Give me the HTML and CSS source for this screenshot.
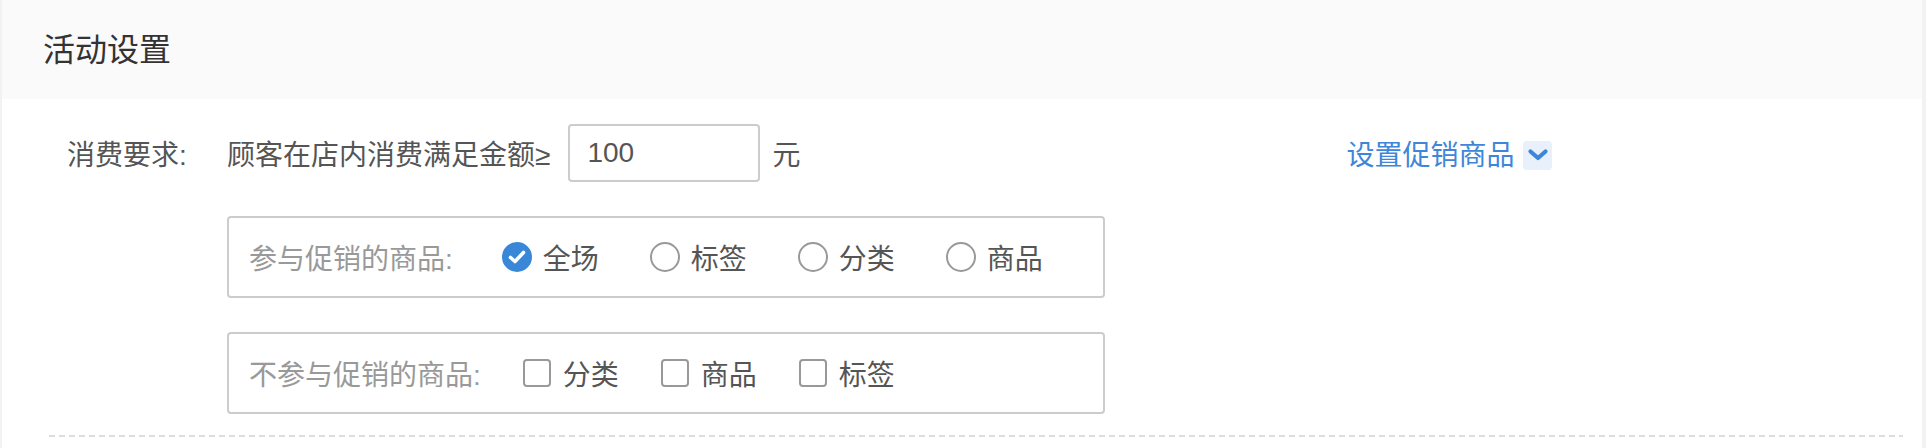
FILE: index.html
```html
<!DOCTYPE html>
<html lang="zh-CN">
<head>
<meta charset="utf-8">
<title>活动设置</title>
<link rel="stylesheet" href="styles.css">
</head>
<body>
<div class="panel">
  <div class="panel-head"><span class="title">活动设置</span></div>
  <div class="panel-body">
    <div class="row row-req">
      <span class="row-label">消费要求:</span>
      <span class="text">顾客在店内消费满足金额≥</span>
      <input class="amount" type="text" value="100">
      <span class="text unit">元</span>
      <a class="link">设置促销商品</a>
      <span class="drop">
        <svg width="22" height="14" viewBox="0 0 22 14"><path d="M3.5 3.5 L11 10 L18.5 3.5" fill="none" stroke="#3f86d8" stroke-width="4.2" stroke-linecap="round" stroke-linejoin="round"/></svg>
      </span>
    </div>
    <div class="group group-1">
      <span class="group-label">参与促销的商品:</span>
      <span class="opt radio-opt"><span class="radio checked"><svg width="20" height="16" viewBox="0 0 20 16"><path d="M3.5 8.5 L8 12.5 L16.5 3.5" fill="none" stroke="#fff" stroke-width="3.6" stroke-linecap="round" stroke-linejoin="round"/></svg></span><span class="opt-text">全场</span></span>
      <span class="opt radio-opt"><span class="radio"></span><span class="opt-text">标签</span></span>
      <span class="opt radio-opt"><span class="radio"></span><span class="opt-text">分类</span></span>
      <span class="opt radio-opt"><span class="radio"></span><span class="opt-text">商品</span></span>
    </div>
    <div class="group group-2">
      <span class="group-label">不参与促销的商品:</span>
      <span class="opt check-opt"><span class="check"></span><span class="opt-text">分类</span></span>
      <span class="opt check-opt"><span class="check"></span><span class="opt-text">商品</span></span>
      <span class="opt check-opt"><span class="check"></span><span class="opt-text">标签</span></span>
    </div>
    <div class="dash"></div>
  </div>
</div>
</body>
</html>
```
FILE: styles.css
```css
html, body {
  margin: 0;
  padding: 0;
  background: #fff;
}
body {
  font-family: "Liberation Sans", "Noto Sans CJK SC", sans-serif;
  color: #555;
  font-size: 28px;
}
.panel {
  height: 448px;
  border-left: 2px solid #f2f2f2;
  border-right: 4px solid #f2f2f2;
  box-sizing: border-box;
}
.panel-head {
  height: 99px;
  background: #fafafa;
  display: flex;
  align-items: center;
  padding-left: 41px;
}
.title {
  font-size: 32px;
  color: #333;
  line-height: 1;
}
.panel-body {
  padding-top: 25px;
}
.row {
  display: flex;
  align-items: center;
  height: 58px;
  padding-left: 65px;
}
.row-label {
  width: 160px;
  color: #555;
}
.text {
  color: #555;
}
.amount {
  box-sizing: border-box;
  width: 192px;
  height: 58px;
  margin-left: 18px;
  border: 2px solid #ccc;
  border-radius: 4px;
  padding: 0 0 0 17px;
  font-family: "Liberation Sans", "Noto Sans CJK SC", sans-serif;
  font-size: 28px;
  color: #555;
  outline: none;
}
.unit {
  margin-left: 12px;
}
.link {
  margin-left: 546px;
  color: #3f86d8;
  cursor: pointer;
}
.drop {
  width: 29px;
  height: 29px;
  margin-left: 9px;
  margin-top: 4px;
  border-radius: 4px;
  background: #e7f0fb;
  display: flex;
  align-items: center;
  justify-content: center;
}
.group {
  box-sizing: border-box;
  width: 878px;
  height: 82px;
  margin-left: 225px;
  margin-top: 34px;
  border: 2px solid #ccc;
  border-radius: 4px;
  display: flex;
  align-items: center;
  padding-left: 20px;
}
.group-label {
  color: #999;
}
.group-1 .group-label {
  margin-right: 49px;
}
.group-2 .group-label {
  margin-right: 42px;
}
.opt {
  display: flex;
  align-items: center;
}
.radio-opt {
  margin-right: 51px;
}
.check-opt {
  margin-right: 42px;
}
.radio {
  box-sizing: border-box;
  width: 30px;
  height: 30px;
  border-radius: 50%;
  border: 2px solid #999;
  display: flex;
  align-items: center;
  justify-content: center;
  margin-right: 11px;
}
.radio.checked {
  border-color: #3a87d8;
  background: #3a87d8;
}
.check {
  box-sizing: border-box;
  width: 28px;
  height: 28px;
  border: 2px solid #999;
  border-radius: 4px;
  margin-right: 12px;
}
.opt-text {
  color: #555;
}
.dash {
  height: 2px;
  margin: 21px 19px 0 47px;
  background: repeating-linear-gradient(to right, #ddd 0, #ddd 6px, transparent 6px, transparent 10px);
}
```
